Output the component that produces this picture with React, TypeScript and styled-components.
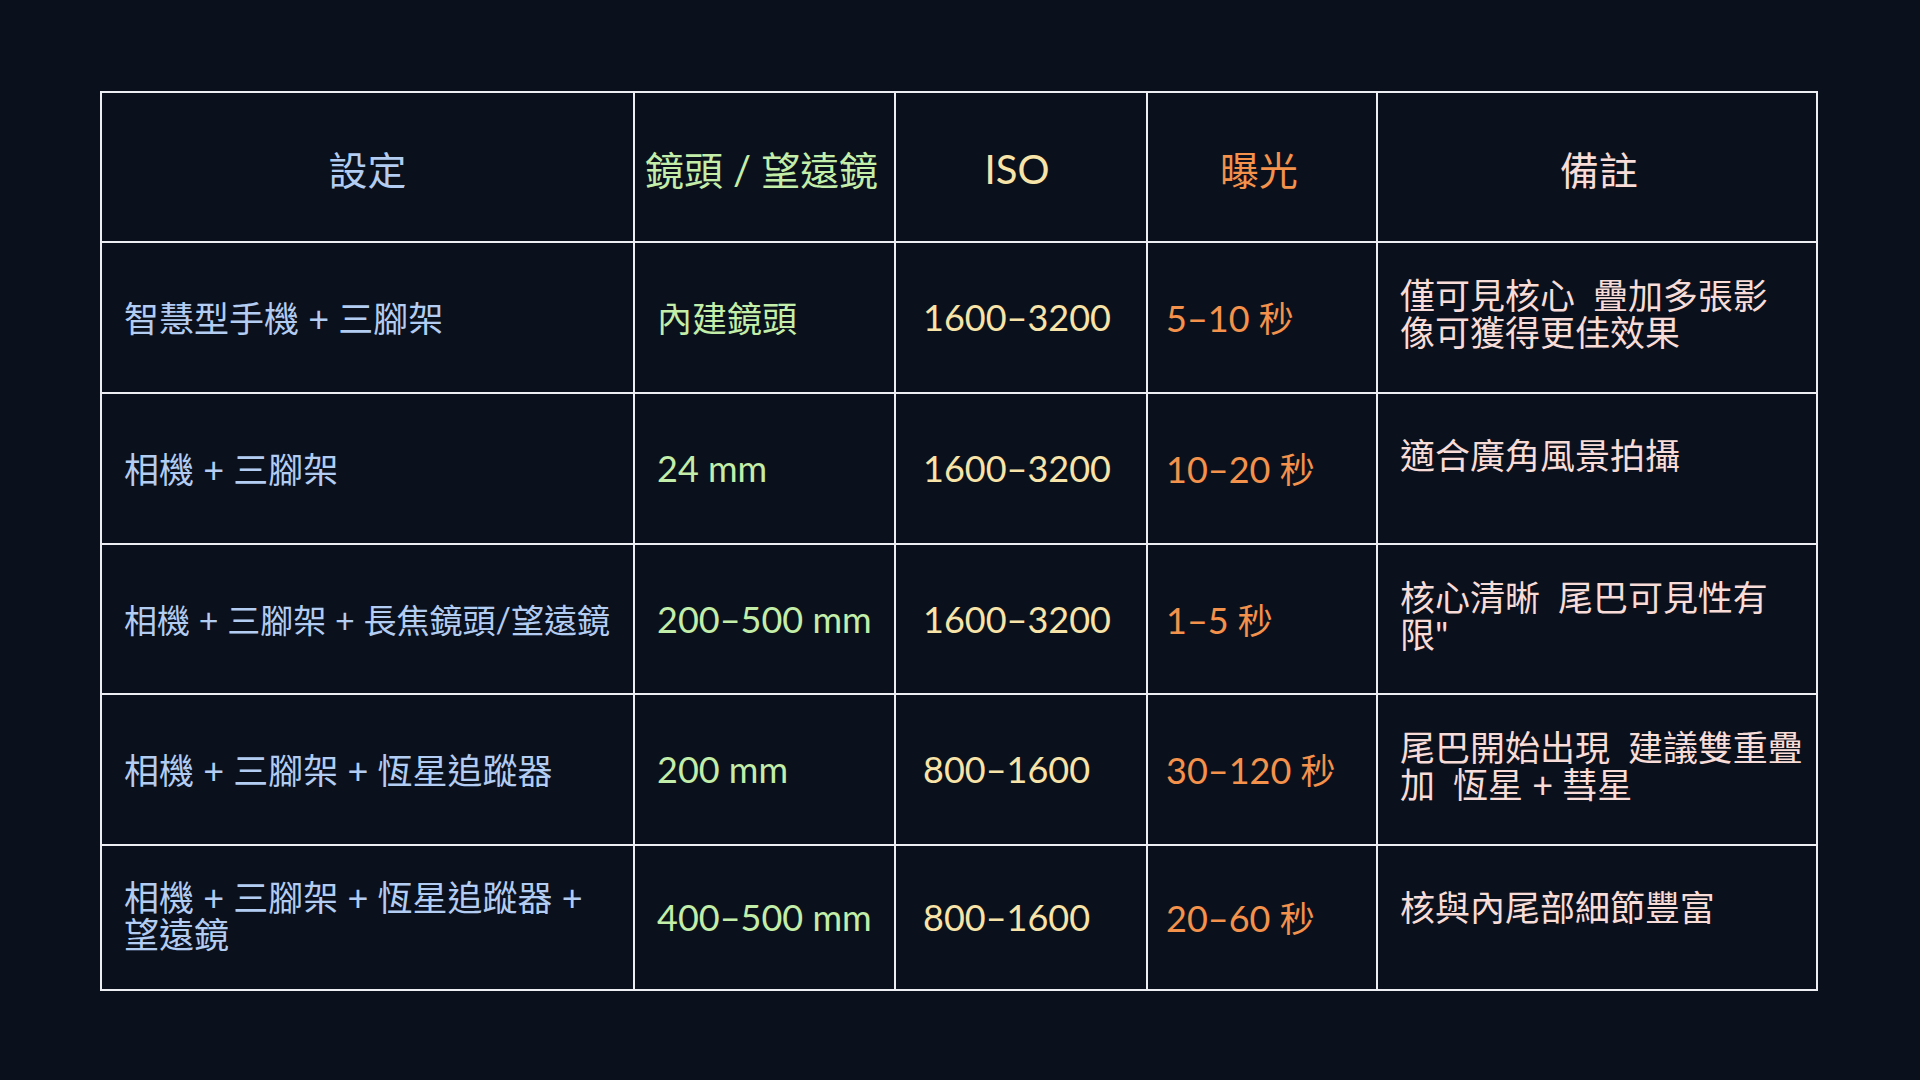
import React from "react";
import styled, { createGlobalStyle } from "styled-components";

const GlobalStyle = createGlobalStyle`
  html, body {
    margin: 0;
    padding: 0;
    background: #0b111c;
  }
  body {
    font-family: Lato, "Noto Sans CJK TC", "Noto Sans CJK SC", sans-serif;
  }
`;

const Page = styled.main`
  min-height: 100vh;
  box-sizing: border-box;
  padding: 91px 0 0 100px;
  background: #0b111c;
`;

const Table = styled.div`
  display: flex;
  flex-direction: column;
  width: max-content;
  border-left: 2px solid #eceef2;
  border-top: 2px solid #eceef2;
`;

const Row = styled.div<{ $h: number }>`
  display: grid;
  grid-template-columns: 533px 261px 252px 230px 440px;
  height: ${(p) => p.$h}px;
`;

type Tone = "blue" | "green" | "yellow" | "orange" | "pink";

const tones: Record<Tone, string> = {
  blue: "#b3ccf2",
  green: "#c3eea9",
  yellow: "#f8e4a8",
  orange: "#f4924c",
  pink: "#f7dcd8",
};

/* CJK runs are set a touch smaller than the Latin text around them */
const Han = styled.span`
  font-family: "Noto Sans CJK TC", "Noto Sans CJK SC", sans-serif;
  font-size: 0.972em;
`;

const Text = styled.span`
  display: block;
  white-space: pre;
`;

const HeadCell = styled.div<{ $tone: Tone; $shift: number }>`
  box-sizing: border-box;
  display: flex;
  align-items: center;
  justify-content: center;
  padding: 4px ${(p) => 6 + p.$shift}px 0 6px;
  border-right: 2px solid #eceef2;
  border-bottom: 2px solid #eceef2;
  color: ${(p) => tones[p.$tone]};
  font-size: 40px;
  line-height: 40px;
`;

const Cell = styled.div<{ $tone: Tone; $size: number; $padLeft: number; $lift: number }>`
  box-sizing: border-box;
  display: flex;
  align-items: center;
  padding: 0 8px ${(p) => p.$lift}px ${(p) => p.$padLeft}px;
  border-right: 2px solid #eceef2;
  border-bottom: 2px solid #eceef2;
  color: ${(p) => tones[p.$tone]};
  font-size: ${(p) => p.$size}px;
  line-height: 35px;
`;

const NoteCell = styled(Cell)<{ $lines: number }>`
  align-items: flex-start;
  padding-top: ${(p) => (p.$lines > 1 ? 33 : 42)}px;
`;

function mixed(text: string) {
  const parts = text.split(/([\u3000-\u303f\u3400-\u9fff\uf900-\ufaff\uff00-\uffef]+)/);
  return (
    <Text>
      {parts.map((part, i) =>
        i % 2 === 1 ? <Han key={i}>{part}</Han> : <React.Fragment key={i}>{part}</React.Fragment>
      )}
    </Text>
  );
}

const headers: { text: string; tone: Tone; shift: number }[] = [
  { text: "設定", tone: "blue", shift: 0 },
  { text: "鏡頭 / 望遠鏡", tone: "green", shift: 6 },
  { text: "ISO", tone: "yellow", shift: 8 },
  { text: "曝光", tone: "orange", shift: 6 },
  { text: "備註", tone: "pink", shift: -4 },
];

type RowData = { h: number; firstSize?: number; cells: [string, string, string, string, string] };

const rows: RowData[] = [
  {
    h: 151,
    cells: [
      "智慧型手機 + 三腳架",
      "內建鏡頭",
      "1600–3200",
      "5–10 秒",
      "僅可見核心\u2002疊加多張影\n像可獲得更佳效果",
    ],
  },
  {
    h: 151,
    cells: ["相機 + 三腳架", "24 mm", "1600–3200", "10–20 秒", "適合廣角風景拍攝"],
  },
  {
    h: 150,
    firstSize: 34,
    cells: [
      "相機 + 三腳架 + 長焦鏡頭/望遠鏡",
      "200–500 mm",
      "1600–3200",
      "1–5 秒",
      "核心清晰\u2002尾巴可見性有\n限\"",
    ],
  },
  {
    h: 151,
    cells: [
      "相機 + 三腳架 + 恆星追蹤器",
      "200 mm",
      "800–1600",
      "30–120 秒",
      "尾巴開始出現\u2002建議雙重疊\n加\u2002恆星 + 彗星",
    ],
  },
  {
    h: 145,
    cells: [
      "相機 + 三腳架 + 恆星追蹤器 +\n望遠鏡",
      "400–500 mm",
      "800–1600",
      "20–60 秒",
      "核與內尾部細節豐富",
    ],
  },
];

const columns: { tone: Tone; padLeft: number }[] = [
  { tone: "blue", padLeft: 22 },
  { tone: "green", padLeft: 22 },
  { tone: "yellow", padLeft: 27 },
  { tone: "orange", padLeft: 18 },
  { tone: "pink", padLeft: 22 },
];

export default function App() {
  return (
    <>
      <GlobalStyle />
      <Page>
        <Table>
          <Row $h={150}>
            {headers.map((h) => (
              <HeadCell key={h.text} $tone={h.tone} $shift={h.shift}>
                {mixed(h.text)}
              </HeadCell>
            ))}
          </Row>
          {rows.map((r, i) => (
            <Row key={i} $h={r.h}>
              {r.cells.map((c, j) => {
                const col = columns[j];
                const size = j === 0 && r.firstSize ? r.firstSize : 36;
                const lines = c.split("\n").length;
                if (j === 4) {
                  return (
                    <NoteCell
                      key={j}
                      $tone={col.tone}
                      $size={size}
                      $padLeft={col.padLeft}
                      $lift={0}
                      $lines={lines}
                    >
                      {mixed(c)}
                    </NoteCell>
                  );
                }
                return (
                  <Cell
                    key={j}
                    $tone={col.tone}
                    $size={size}
                    $padLeft={col.padLeft}
                    $lift={lines > 1 ? 6 : 0}
                  >
                    {mixed(c)}
                  </Cell>
                );
              })}
            </Row>
          ))}
        </Table>
      </Page>
    </>
  );
}
